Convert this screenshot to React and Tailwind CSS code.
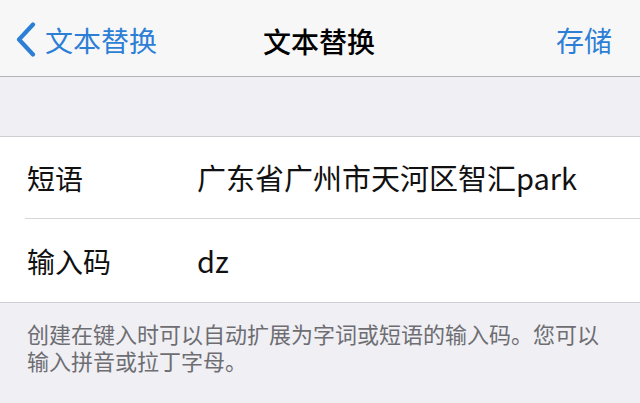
export default function App() {
  const font = { fontFamily: '"Noto Sans CJK SC", "Noto Sans", sans-serif' };

  return (
    <div className="w-[640px] h-[403px] overflow-hidden bg-[#efeff4]" style={font}>
      {/* Nav bar */}
      <div className="h-[77px] bg-[#f7f7f8] border-b border-[#b4b4b8] flex items-center justify-between pl-[15px] pr-[28px] relative">
        <div className="flex items-center gap-[9px] text-[#2d7fd6] text-[28px] leading-none pt-[3px]">
          <svg width="21" height="35" viewBox="0 0 21 35" fill="none">
            <path d="M18 2.5 L4 17.5 L18 32.5" stroke="#2d7fd6" strokeWidth="4.2" strokeLinecap="round" strokeLinejoin="round" />
          </svg>
          <span>文本替换</span>
        </div>
        <div className="absolute left-[263px] top-0 h-full flex items-center pt-[6px] text-[28px] leading-none font-medium text-black">
          文本替换
        </div>
        <div className="text-[28px] leading-none text-[#2d7fd6] pt-[3px]">存储</div>
      </div>

      <div className="h-[59px]" />

      {/* Fields */}
      <div className="bg-white border-y border-[#cfcfd3]">
        <div className="h-[81px] flex items-center pl-[27px] text-[28px] leading-none text-[#111]">
          <span className="w-[170px]">短语</span>
          <span className="text-[29px]">广东省广州市天河区智汇park</span>
        </div>
        <div className="ml-[25px] h-px bg-[#d6d6da]" />
        <div className="h-[83px] flex items-center pl-[27px] text-[28px] leading-none text-[#111]">
          <span className="w-[170px]">输入码</span>
          <span className="text-[29px]">dz</span>
        </div>
      </div>

      {/* Footer note */}
      <p className="px-[27px] pt-[17px] text-[22px] leading-[27px] text-[#6d6d72]">
        创建在键入时可以自动扩展为字词或短语的输入码。您可以输入拼音或拉丁字母。
      </p>
    </div>
  );
}
